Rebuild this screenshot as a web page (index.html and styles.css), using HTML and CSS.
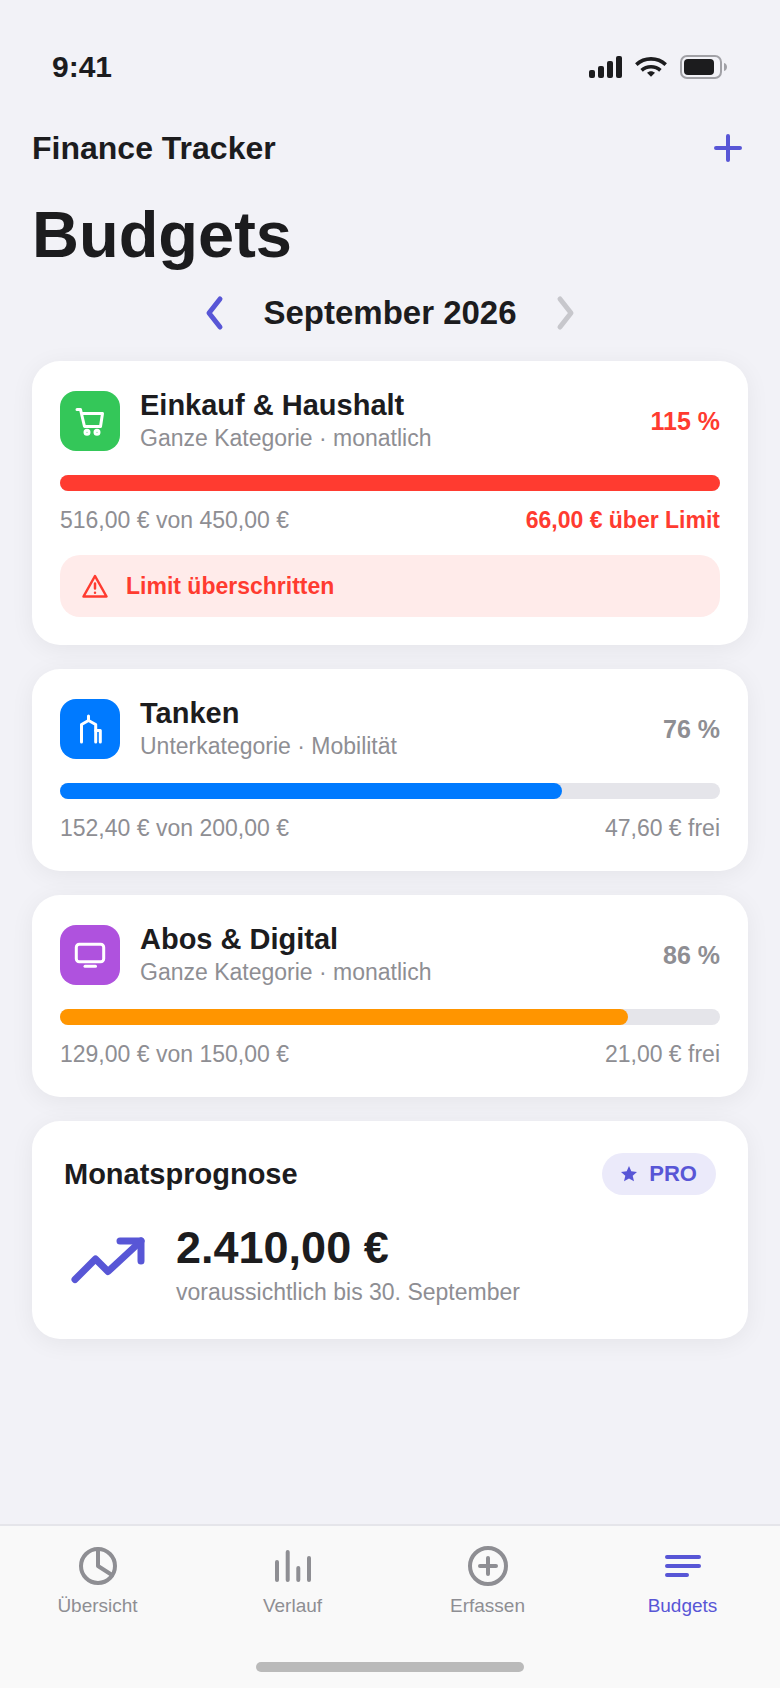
FILE: index.html
```
<!DOCTYPE html>
<html lang="de">
<head>
    <meta charset="UTF-8">
    <meta name="viewport" content="width=device-width, initial-scale=1.0">
    <title>Finance Tracker – Budgets</title>
    <link rel="stylesheet" href="styles.css">
</head>
<body>
    <div class="statusbar">
        <span class="time">9:41</span>
        <div class="status-icons">
            <svg width="33" height="22" viewBox="0 0 33 22" fill="currentColor">
                <rect x="0" y="14" width="6" height="8" rx="2"/>
                <rect x="9" y="10" width="6" height="12" rx="2"/>
                <rect x="18" y="5" width="6" height="17" rx="2"/>
                <rect x="27" y="0" width="6" height="22" rx="2"/>
            </svg>
            <svg width="32" height="20" viewBox="0 0 32 20" fill="none" stroke="currentColor" stroke-width="3.6">
                <path d="M1.3 7.6C9.5 0 22.5 0 30.7 7.6"/>
                <path d="M6.6 13.4C11.8 8.6 20.2 8.6 25.4 13.4"/>
                <path d="M12 15.8C14.2 13.6 17.8 13.6 20 15.8L16 19.8Z" fill="currentColor" stroke="none"/>
            </svg>
            <svg width="48" height="24" viewBox="0 0 48 24">
                <rect x="1" y="1" width="40" height="22" rx="6" fill="none" stroke="#a1a1a6" stroke-width="2"/>
                <rect x="4" y="4" width="30" height="16" rx="4" fill="currentColor"/>
                <path d="M44 8C48 9 48 15 44 16Z" fill="#a1a1a6"/>
            </svg>
        </div>
    </div>

    <header class="header">
        <span class="app-name">Finance Tracker</span>
        <button class="icon-button" type="button" aria-label="Budget hinzufügen">
            <svg width="28" height="28" viewBox="0 0 28 28"><path d="M14 2V26M2 14H26"/></svg>
        </button>
    </header>

    <main>
        <h1>Budgets</h1>

        <div class="month">
            <button type="button" aria-label="Vorheriger Monat">
                <svg width="24" height="36" viewBox="0 0 24 36"><path d="M17 4L6 18L17 32"/></svg>
            </button>
            <h2>September 2026</h2>
            <button type="button" aria-label="Nächster Monat" disabled>
                <svg width="24" height="36" viewBox="0 0 24 36"><path d="M7 4L18 18L7 32"/></svg>
            </button>
        </div>

        <div class="cards">
            <section class="card">
                <div class="card-head">
                    <div class="category green">
                        <svg width="60" height="60" viewBox="0 0 60 60">
                            <path d="M17 18.5H20.5L24.5 35.5H40.5L42.5 22.5H21.5"/>
                            <circle cx="27" cy="41.3" r="2"/>
                            <circle cx="37" cy="41.3" r="2"/>
                        </svg>
                    </div>
                    <div class="card-title">
                        <h3>Einkauf &amp; Haushalt</h3>
                        <p>Ganze Kategorie · monatlich</p>
                    </div>
                    <span class="percent over">115 %</span>
                </div>
                <div class="bar" role="progressbar" aria-valuenow="100" aria-label="Einkauf &amp; Haushalt">
                    <div class="fill red" style="width: 100%"></div>
                </div>
                <div class="amounts">
                    <span>516,00 € von 450,00 €</span>
                    <span class="over">66,00 € über Limit</span>
                </div>
                <div class="warning">
                    <svg width="28" height="28" viewBox="0 0 28 28">
                        <path d="M15 4L26.5 24.5H3.5Z"/>
                        <path d="M15 11.5V16.5M15 20.7V20.8"/>
                    </svg>
                    <span>Limit überschritten</span>
                </div>
            </section>

            <section class="card">
                <div class="card-head">
                    <div class="category blue">
                        <svg width="60" height="60" viewBox="0 0 60 60">
                            <path d="M21.5 43V25.5L28.5 21.5L35.7 25.5V43"/>
                            <path d="M28.5 21.5V17M35.7 31.5H40.3V43"/>
                        </svg>
                    </div>
                    <div class="card-title">
                        <h3>Tanken</h3>
                        <p>Unterkategorie · Mobilität</p>
                    </div>
                    <span class="percent">76 %</span>
                </div>
                <div class="bar" role="progressbar" aria-valuenow="76" aria-label="Tanken">
                    <div class="fill blue" style="width: 76%"></div>
                </div>
                <div class="amounts">
                    <span>152,40 € von 200,00 €</span>
                    <span>47,60 € frei</span>
                </div>
            </section>

            <section class="card">
                <div class="card-head">
                    <div class="category purple">
                        <svg width="60" height="60" viewBox="0 0 60 60">
                            <rect x="16.3" y="19.3" width="27.4" height="17.4" rx="3"/>
                            <path d="M25 41.3H35.5"/>
                        </svg>
                    </div>
                    <div class="card-title">
                        <h3>Abos &amp; Digital</h3>
                        <p>Ganze Kategorie · monatlich</p>
                    </div>
                    <span class="percent">86 %</span>
                </div>
                <div class="bar" role="progressbar" aria-valuenow="86" aria-label="Abos &amp; Digital">
                    <div class="fill orange" style="width: 86%"></div>
                </div>
                <div class="amounts">
                    <span>129,00 € von 150,00 €</span>
                    <span>21,00 € frei</span>
                </div>
            </section>

            <section class="card forecast">
                <div class="forecast-head">
                    <h3>Monatsprognose</h3>
                    <span class="pro">
                        <svg width="16" height="16" viewBox="0 0 16 16" fill="currentColor">
                            <path d="M8 0L10.3 5.3L16 5.9L11.7 9.7L13 15.3L8 12.4L3 15.3L4.3 9.7L0 5.9L5.7 5.3Z"/>
                        </svg>
                        PRO
                    </span>
                </div>
                <div class="forecast-body">
                    <svg width="84" height="84" viewBox="0 0 84 84">
                        <path d="M11 56.5L31.5 36L44 48.5L77 18"/>
                        <path d="M56 18H77V38"/>
                    </svg>
                    <div>
                        <p class="forecast-amount">2.410,00 €</p>
                        <p class="forecast-note">voraussichtlich bis 30. September</p>
                    </div>
                </div>
            </section>
        </div>
    </main>

    <footer class="tabbar">
        <nav>
            <a href="#uebersicht">
                <svg width="48" height="48" viewBox="0 0 48 48"><circle cx="24" cy="24" r="17"/><path d="M24 7V24L38 33"/></svg>
                Übersicht
            </a>
            <a href="#verlauf">
                <svg width="48" height="48" viewBox="0 0 48 48"><path d="M8 20V38M18.7 10V38M29.3 26V38M40 16V38"/></svg>
                Verlauf
            </a>
            <a href="#erfassen">
                <svg width="48" height="48" viewBox="0 0 48 48"><circle cx="24" cy="24" r="18"/><path d="M24 16V32M16 24H32"/></svg>
                Erfassen
            </a>
            <a href="#budgets" class="active" aria-current="page">
                <svg width="48" height="48" viewBox="0 0 48 48"><path d="M8 15H40M8 24H40M8 33H28"/></svg>
                Budgets
            </a>
        </nav>
        <div class="home-indicator"></div>
    </footer>
</body>
</html>
```
FILE: styles.css
```
* {
    box-sizing: border-box;
}
body {
    font-family: "Liberation Sans", Arial, sans-serif;
    margin: 0;
    min-height: 100vh;
    display: flex;
    flex-direction: column;
    background: #f2f2f7;
    color: #1c1c1e;
}
h1, h2, h3, p {
    margin: 0;
}
svg {
    display: block;
    flex-shrink: 0;
}
button {
    padding: 0;
    border: none;
    background: none;
    color: #5856d6;
    cursor: pointer;
}
button:disabled {
    color: #c7c7cc;
    cursor: default;
}
button svg {
    fill: none;
    stroke: currentColor;
    stroke-width: 4;
    stroke-linecap: round;
    stroke-linejoin: round;
}

/* Status bar */
.statusbar {
    display: flex;
    justify-content: space-between;
    align-items: center;
    padding: 50px 52px 42px;
}
.time {
    font-size: 30px;
    line-height: 34px;
    font-weight: bold;
}
.status-icons {
    display: flex;
    align-items: center;
    gap: 13px;
}

/* Header */
.header {
    display: flex;
    justify-content: space-between;
    align-items: center;
    padding: 0 30px 0 32px;
}
.app-name {
    font-size: 32px;
    line-height: 44px;
    font-weight: bold;
}
.icon-button {
    width: 44px;
    height: 44px;
    display: flex;
    align-items: center;
    justify-content: center;
}
main {
    flex: 1;
    padding: 25px 32px;
}
h1 {
    font-size: 65px;
    line-height: 80px;
}
.month {
    display: flex;
    justify-content: center;
    align-items: center;
    gap: 36px;
    margin: 18px 0 28px;
}
.month h2 {
    font-size: 33px;
    line-height: 40px;
}
.month svg {
    stroke-width: 5;
}

/* Cards */
.cards {
    display: flex;
    flex-direction: column;
    gap: 24px;
}
.card {
    padding: 28px;
    border-radius: 28px;
    background: #ffffff;
    box-shadow: 0 4px 24px rgba(0, 0, 0, 0.06);
}
.card h3 {
    font-size: 29px;
    line-height: 32px;
}
.card-head {
    display: flex;
    align-items: center;
    gap: 20px;
}
.card-title {
    flex: 1;
    display: flex;
    flex-direction: column;
    gap: 2px;
}
.card-title p,
.amounts,
.forecast-note,
.warning {
    font-size: 23px;
    line-height: 30px;
}
.card-title p,
.amounts,
.forecast-note {
    color: #8e8e93;
}
.category {
    border-radius: 16px;
}
.category svg {
    fill: none;
    stroke: #ffffff;
    stroke-width: 3;
    stroke-linecap: round;
    stroke-linejoin: round;
}
.green {
    background: #34c759;
}
.blue {
    background: #007aff;
}
.purple {
    background: #af52de;
}
.red {
    background: #ff3b30;
}
.orange {
    background: #ff9500;
}
.percent {
    font-size: 25px;
    font-weight: bold;
    color: #8e8e93;
}
.bar {
    height: 16px;
    margin: 22px 0 14px;
    border-radius: 8px;
    background: #e5e5ea;
}
.fill {
    height: 100%;
    border-radius: 8px;
}
.amounts {
    display: flex;
    justify-content: space-between;
}
.over {
    color: #ff3b30;
    font-weight: bold;
}
.warning {
    display: flex;
    align-items: center;
    gap: 18px;
    margin-top: 20px;
    padding: 16px 20px;
    border-radius: 20px;
    background: #ffebea;
    color: #ff3b30;
    font-weight: bold;
}
.warning svg {
    fill: none;
    stroke: currentColor;
    stroke-width: 2.5;
    stroke-linecap: round;
    stroke-linejoin: round;
}

/* Forecast */
.forecast {
    padding: 32px;
}
.forecast-head {
    display: flex;
    justify-content: space-between;
    align-items: center;
}
.pro {
    display: flex;
    align-items: center;
    gap: 12px;
    height: 42px;
    padding: 0 19px;
    border-radius: 21px;
    background: #ebeafa;
    color: #5856d6;
    font-size: 22px;
    font-weight: bold;
}
.forecast-body {
    display: flex;
    gap: 28px;
    margin-top: 28px;
}
.forecast-body svg {
    fill: none;
    stroke: #5856d6;
    stroke-width: 7;
    stroke-linecap: round;
    stroke-linejoin: round;
}
.forecast-amount {
    font-size: 45px;
    line-height: 50px;
    font-weight: bold;
    margin-bottom: 4px;
}

/* Tab bar */
.tabbar {
    border-top: 2px solid #e5e5ea;
    background: #f9f9f9;
    padding: 16px 0;
}
.tabbar nav {
    display: grid;
    grid-template-columns: repeat(4, 1fr);
}
.tabbar a {
    display: flex;
    flex-direction: column;
    align-items: center;
    gap: 4px;
    color: #8e8e93;
    font-size: 19px;
    line-height: 24px;
    text-decoration: none;
}
.tabbar a.active {
    color: #5856d6;
}
.tabbar svg {
    fill: none;
    stroke: currentColor;
    stroke-width: 4;
    stroke-linecap: round;
    stroke-linejoin: round;
}
.home-indicator {
    width: 268px;
    height: 10px;
    margin: 44px auto 0;
    border-radius: 5px;
    background: #bababa;
}
```
